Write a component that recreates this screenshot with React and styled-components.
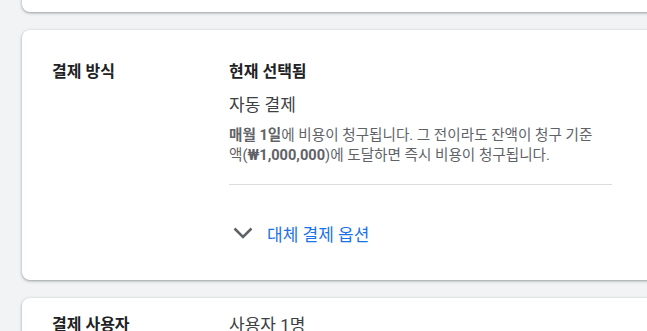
import React from "react";
import styled, { createGlobalStyle } from "styled-components";

const Global = createGlobalStyle`
  html, body { margin: 0; padding: 0; background: #f1f3f4; overflow: hidden; }
  body { font-family: Roboto, "Noto Sans CJK KR", "Noto Sans", sans-serif; color: #202124; }
`;

const Page = styled.div`
  display: flex;
  flex-direction: column;
  gap: 18px;
  padding-left: 22px;
  margin-top: -20px;
  width: 720px;
`;

const Card = styled.section`
  background: #fff;
  border-radius: 8px;
  box-shadow: 0 1px 2px rgba(60, 64, 67, 0.3), 0 1px 3px 1px rgba(60, 64, 67, 0.15);
  min-height: ${(p) => p.$h || 0}px;
  padding: ${(p) => p.$pt || 0}px 0 ${(p) => p.$pb || 0}px 30px;
  box-sizing: border-box;
  display: grid;
  grid-template-columns: 177px 383px;
  align-content: start;
`;

const Label = styled.h2`
  margin: 0;
  font-size: 16px;
  line-height: 24px;
  font-weight: 700;
  color: #202124;
`;

const Value = styled.div`
  display: flex;
  flex-direction: column;
`;

const Heading = styled.h3`
  margin: 0;
  font-size: 16px;
  line-height: 24px;
  font-weight: 700;
  color: #202124;
`;

const Method = styled.div`
  margin-top: ${(p) => p.$mt || 0}px;
  font-size: 17px;
  line-height: 24px;
  color: #3c4043;
`;

const Desc = styled.p`
  margin: 8px 0 0;
  font-size: 14.6px;
  line-height: 20px;
  color: #5f6368;
  word-break: keep-all;
  b { font-weight: 700; }
`;

const NoWrap = styled.span`
  white-space: nowrap;
`;

const Divider = styled.hr`
  margin: 19px 0 0;
  border: 0;
  height: 1px;
  background: #dadce0;
`;

const Expander = styled.button`
  margin-top: 24px;
  height: 48px;
  display: flex;
  align-items: center;
  gap: 14px;
  padding: 0 0 0 4px;
  border: 0;
  background: none;
  font: inherit;
  font-size: 17px;
  color: #1a73e8;
  cursor: pointer;
  text-align: left;
`;

const Chevron = () => (
  <svg width="20" height="12" viewBox="0 0 20 12" aria-hidden="true">
    <path d="M1.5 1.5 L10 10 L18.5 1.5" fill="none" stroke="#5f6368" strokeWidth="2.6" />
  </svg>
);

export default function App() {
  return (
    <>
      <Global />
      <Page>
        <Card $h={32} />
        <Card $h={250} $pt={30}>
          <Label>결제 방식</Label>
          <Value>
            <Heading>현재 선택됨</Heading>
            <Method $mt={9}>자동 결제</Method>
            <Desc>
              <b>매월 1일</b>에 비용이 청구됩니다. 그 전이라도 잔액이 청구 기준{" "}
              <NoWrap>
                액(<b>₩1,000,000</b>)에
              </NoWrap>{" "}
              도달하면 즉시 비용이 청구됩니다.
            </Desc>
            <Divider />
            <Expander>
              <Chevron />
              대체 결제 옵션
            </Expander>
          </Value>
        </Card>
        <Card $h={80} $pt={15}>
          <Label>결제 사용자</Label>
          <Value>
            <Method>사용자 1명</Method>
          </Value>
        </Card>
      </Page>
    </>
  );
}
